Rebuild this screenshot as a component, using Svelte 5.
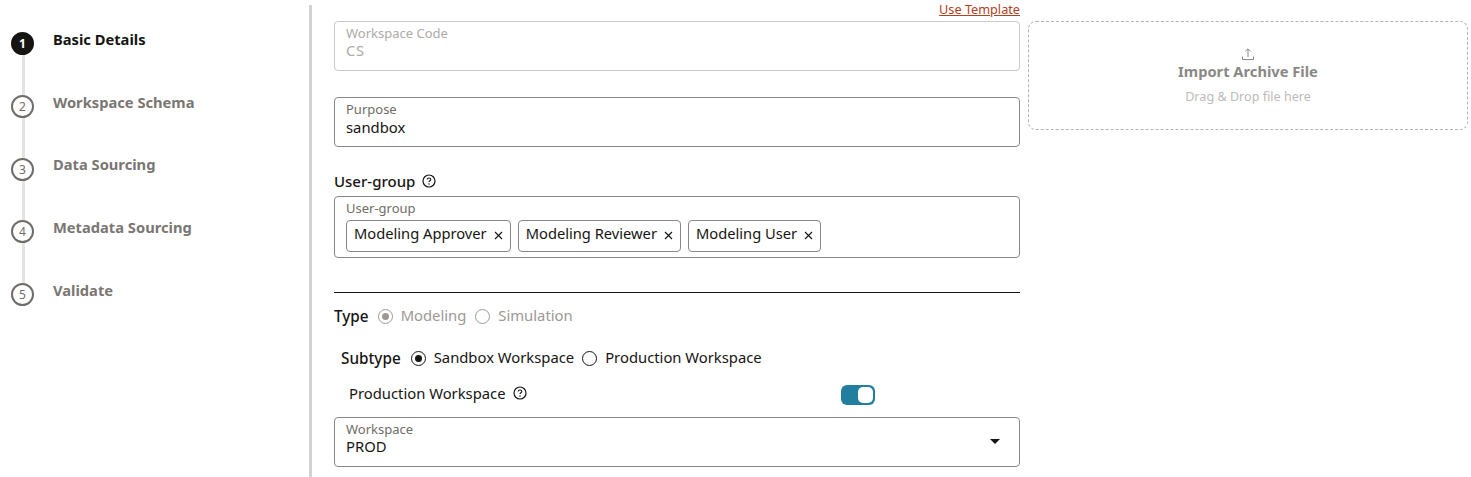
<script>
  const steps = ['Basic Details', 'Workspace Schema', 'Data Sourcing', 'Metadata Sourcing', 'Validate'];
  const tags = ['Modeling Approver', 'Modeling Reviewer', 'Modeling User'];
</script>

{#snippet help()}
  <svg class="help" viewBox="0 0 14 14" width="14" height="14" aria-hidden="true">
    <circle cx="7" cy="7" r="6" fill="none" stroke="#161513" stroke-width="1.2" />
    <path d="M5.2 5.6c0-1 .8-1.6 1.8-1.6s1.8.6 1.8 1.5c0 1.3-1.8 1.3-1.8 2.6" fill="none" stroke="#161513" stroke-width="1.1" />
    <circle cx="7" cy="10.1" r=".75" fill="#161513" />
  </svg>
{/snippet}

{#snippet cross()}
  <svg class="cross" viewBox="0 0 9 9" width="9" height="9" aria-hidden="true">
    <path d="M1 1l7 7M8 1l-7 7" stroke="#161513" stroke-width="1.1" fill="none" />
  </svg>
{/snippet}

<div class="page">
  <aside class="side">
    <ol class="steps">
      {#each steps as s, i}
        <li class="step" class:active={i === 0} class:last={i === steps.length - 1}>
          <span class="num">{i + 1}</span>
          <span class="name">{s}</span>
        </li>
      {/each}
    </ol>
  </aside>

  <main class="form">
    <a class="tpl" href="#tpl">Use Template</a>

    <div class="field disabled">
      <span class="lab">Workspace Code</span>
      <span class="val">CS</span>
    </div>

    <div class="field purpose">
      <span class="lab">Purpose</span>
      <span class="val">sandbox</span>
    </div>

    <div class="grouphead">User-group {@render help()}</div>
    <div class="field tagsbox">
      <span class="lab">User-group</span>
      <div class="tags">
        {#each tags as t}
          <span class="tag">{t}{@render cross()}</span>
        {/each}
      </div>
    </div>

    <hr class="rule" />

    <div class="radios type">
      <span class="rlabel">Type</span>
      <span class="radio on dim"></span><span class="opt dim">Modeling</span>
      <span class="radio dim second"></span><span class="opt dim">Simulation</span>
    </div>

    <div class="radios subtype">
      <span class="rlabel">Subtype</span>
      <span class="radio on"></span><span class="opt">Sandbox Workspace</span>
      <span class="radio second"></span><span class="opt">Production Workspace</span>
    </div>

    <div class="prod">
      <span class="prodlabel">Production Workspace {@render help()}</span>
      <span class="switch"><span class="knob"></span></span>
    </div>

    <div class="field select">
      <span class="lab">Workspace</span>
      <span class="val">PROD</span>
      <span class="caret"></span>
    </div>
  </main>

  <section class="drop">
    <svg viewBox="0 0 14 14" width="14" height="14" aria-hidden="true">
      <path d="M7 10V2M4.4 4.4L7 1.8l2.6 2.6M1.5 9.5v3h11v-3" fill="none" stroke="#8a8886" stroke-width="1" />
    </svg>
    <div class="droptitle">Import Archive File</div>
    <div class="dropsub">Drag &amp; Drop file here</div>
  </section>
</div>

<style>
  :global(body) {
    margin: 0;
    background: #fff;
  }
  .page {
    display: flex;
    align-items: flex-start;
    height: 477px;
    overflow: hidden;
    font-family: "Noto Sans", "Open Sans", sans-serif;
    color: #161513;
    font-size: 14.8px;
  }
  .side {
    width: 309px;
    height: 472px;
    margin-top: 5px;
    border-right: 3px solid #d2d2d2;
    flex: none;
    box-sizing: content-box;
  }
  .steps {
    list-style: none;
    margin: 0;
    padding: 27px 0 0 11px;
  }
  .step {
    position: relative;
    height: 62.75px;
    display: flex;
    align-items: flex-start;
    gap: 19px;
    box-sizing: border-box;
  }
  .step::before {
    content: "";
    position: absolute;
    left: 10.5px;
    top: 20px;
    width: 3px;
    height: 46px;
    background: #e4e3e2;
  }
  .step.last::before {
    display: none;
  }
  .num {
    position: relative;
    width: 23px;
    height: 23px;
    box-sizing: border-box;
    border: 2px solid #6f6c69;
    border-radius: 50%;
    background: #fff;
    color: #6f6c69;
    font-size: 12px;
    display: flex;
    align-items: center;
    justify-content: center;
    flex: none;
  }
  .active .num {
    background: #161513;
    border-color: #161513;
    color: #fff;
    font-weight: 700;
  }
  .name {
    font-size: 14.7px;
    font-weight: 700;
    line-height: 19px;
    color: #7a7672;
    margin-top: -2.1px;
  }
  .active .name {
    color: #161513;
  }

  .form {
    width: 686px;
    margin-left: 22px;
    flex: none;
    display: flex;
    flex-direction: column;
  }
  .tpl {
    align-self: flex-end;
    height: 21px;
    line-height: 19px;
    font-size: 12.7px;
    color: #b3401f;
    text-decoration: underline;
  }
  .field {
    position: relative;
    box-sizing: border-box;
    height: 50px;
    border: 1px solid #8a8886;
    border-radius: 4px;
    padding: 3px 11px 0;
    display: flex;
    flex-direction: column;
  }
  .lab {
    font-size: 13px;
    line-height: 16px;
    color: #6f6c69;
  }
  .val {
    font-size: 14.8px;
    line-height: 20px;
  }
  .disabled {
    border-color: #cbcac8;
  }
  .disabled .lab,
  .disabled .val {
    color: #adaaa7;
  }
  .disabled .val {
    line-height: 18px;
    letter-spacing: 0.6px;
  }
  .purpose {
    margin-top: 26px;
  }
  .grouphead {
    margin-top: 22px;
    height: 27px;
    padding-bottom: 3px;
    box-sizing: border-box;
    font-size: 15px;
    font-weight: 500;
    display: flex;
    align-items: center;
    gap: 7px;
  }
  .tagsbox {
    height: 62px;
  }
  .tags {
    display: flex;
    gap: 7px;
    margin-top: 4px;
  }
  .tag {
    box-sizing: border-box;
    height: 32px;
    border: 1px solid #8a8886;
    border-radius: 4px;
    padding: 0 7px 6px 7px;
    display: flex;
    align-items: center;
    gap: 7px;
    font-size: 14.7px;
  }
  .cross {
    margin-top: 5px;
  }
  .rule {
    margin: 34px 0 0;
    border: 0;
    border-top: 1px solid #161513;
  }
  .radios {
    display: flex;
    align-items: center;
    height: 20px;
  }
  .rlabel {
    font-size: 15.3px;
    font-weight: 500;
    margin-right: 10px;
  }
  .type .rlabel {
    margin-right: 9px;
  }
  .opt {
    margin-left: 8px;
    margin-top: -2px;
  }
  .radio {
    width: 15px;
    height: 15px;
    box-sizing: border-box;
    border: 1px solid #161513;
    border-radius: 50%;
    display: flex;
    align-items: center;
    justify-content: center;
    flex: none;
  }
  .radio.on::after {
    content: "";
    width: 7px;
    height: 7px;
    border-radius: 50%;
    background: #161513;
  }
  .second {
    margin-left: 8px;
  }
  .type .second {
    margin-left: 9px;
  }
  .opt.dim {
    color: #9c9996;
  }
  .radio.dim {
    border-color: #9c9996;
  }
  .radio.dim::after {
    background: #9c9996;
  }
  .type {
    margin-top: 13px;
  }
  .subtype {
    margin-top: 22px;
    padding-left: 7px;
  }
  .prod {
    display: flex;
    align-items: center;
    height: 20px;
    margin-top: 15px;
    padding-left: 15px;
  }
  .prodlabel {
    width: 492px;
    display: flex;
    align-items: center;
    gap: 7px;
  }
  .switch {
    width: 34px;
    height: 20px;
    box-sizing: border-box;
    border-radius: 6px;
    background: #227e9e;
    padding: 2px;
    display: flex;
    justify-content: flex-end;
    margin-top: 4px;
  }
  .knob {
    width: 15px;
    height: 16px;
    border-radius: 5px;
    background: #fff;
  }
  .select {
    margin-top: 14px;
  }
  .select .val {
    line-height: 18px;
  }
  .caret {
    position: absolute;
    right: 19px;
    top: 21px;
    width: 0;
    height: 0;
    border-left: 5.5px solid transparent;
    border-right: 5.5px solid transparent;
    border-top: 5.5px solid #161513;
  }

  .drop {
    box-sizing: border-box;
    width: 440px;
    height: 109px;
    margin: 21px 0 0 8px;
    flex: none;
    border: 1px dashed #b5b3b1;
    border-radius: 8px;
    display: flex;
    flex-direction: column;
    align-items: center;
    padding-top: 25px;
  }
  .droptitle {
    font-size: 14.7px;
    font-weight: 700;
    line-height: 20px;
    color: #8a8886;
  }
  .dropsub {
    font-size: 12.6px;
    line-height: 17px;
    margin-top: 7px;
    color: #bdbbb9;
  }
</style>
